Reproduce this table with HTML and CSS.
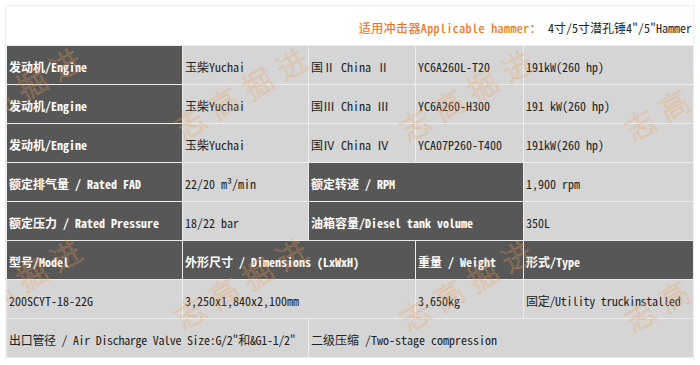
FILE: index.html
```html
<!DOCTYPE html>
<html lang="zh-CN">
<head>
  <meta charset="UTF-8">
  <title>200SCYT-18-22G 参数</title>
  <link rel="stylesheet" href="styles.css">
</head>
<body>
  <div class="sheet">
    <div class="caption">
      <span class="caption-label">适用冲击器Applicable hammer：</span>
      <span class="caption-value">4寸/5寸潜孔锤4"/5"Hammer</span>
    </div>
    <table class="specs">
      <colgroup>
        <col class="c1"><col class="c2"><col class="c3"><col class="c4"><col class="c5">
      </colgroup>
      <tr>
        <td class="head">发动机/Engine</td>
        <td>玉柴Yuchai</td>
        <td>国Ⅱ China Ⅱ</td>
        <td>YC6A260L-T20</td>
        <td>191kW(260 hp)</td>
      </tr>
      <tr>
        <td class="head">发动机/Engine</td>
        <td>玉柴Yuchai</td>
        <td>国Ⅲ China Ⅲ</td>
        <td>YC6A260-H300</td>
        <td>191 kW(260 hp)</td>
      </tr>
      <tr>
        <td class="head">发动机/Engine</td>
        <td>玉柴Yuchai</td>
        <td>国Ⅳ China Ⅳ</td>
        <td>YCA07P260-T400</td>
        <td>191kW(260 hp)</td>
      </tr>
      <tr>
        <td class="head">额定排气量 / Rated FAD</td>
        <td>22/20 m³/min</td>
        <td class="head" colspan="2">额定转速 / RPM</td>
        <td>1,900 rpm</td>
      </tr>
      <tr>
        <td class="head">额定压力 / Rated Pressure</td>
        <td>18/22 bar</td>
        <td class="head" colspan="2">油箱容量/Diesel tank volume</td>
        <td>350L</td>
      </tr>
      <tr>
        <td class="head">型号/Model</td>
        <td class="head" colspan="2">外形尺寸 / Dimensions (LxWxH)</td>
        <td class="head">重量 / Weight</td>
        <td class="head">形式/Type</td>
      </tr>
      <tr>
        <td>200SCYT-18-22G</td>
        <td colspan="2">3,250x1,840x2,100mm</td>
        <td>3,650kg</td>
        <td class="tight">固定/Utility truckinstalled</td>
      </tr>
      <tr>
        <td class="tight" colspan="2">出口管径 / Air Discharge Valve Size:G/2"和&amp;G1-1/2"</td>
        <td colspan="3">二级压缩 /Two-stage compression</td>
      </tr>
    </table>

    <!-- watermark layer -->
    <div class="watermarks">
      <span class="wm" style="left: 12px; top: 84px">志高掘进</span>
      <span class="wm" style="left: 238px; top: 84px">志高掘进</span>
      <span class="wm" style="left: 463px; top: 86px">志高掘进</span>
      <span class="wm" style="left: 688px; top: 86px">志高掘进</span>
      <span class="wm" style="left: 12px; top: 275px">志高掘进</span>
      <span class="wm" style="left: 238px; top: 274px">志高掘进</span>
      <span class="wm" style="left: 463px; top: 276px">志高掘进</span>
      <span class="wm" style="left: 688px; top: 277px">志高掘进</span>
    </div>
  </div>
</body>
</html>
```

FILE: styles.css
```css
* {
  margin: 0;
  padding: 0;
  box-sizing: border-box;
}

body {
  background: #fff;
  font-family: 'Noto Sans Mono CJK SC', 'Noto Sans CJK SC', 'Liberation Mono', monospace;
  font-size: 12px;
  color: #222;
}

.sheet {
  position: relative;
  width: 689px;
  height: 356px;
  margin: 5px 0 0 5px;
  border: 1px solid #eeeeee;
  border-bottom: none;
  overflow: hidden;
}

.caption {
  display: flex;
  justify-content: flex-end;
  align-items: center;
  height: 39px;
  padding-top: 4px;
  padding-right: 1px;
  white-space: nowrap;
}

.caption-label {
  color: #f07418;
  letter-spacing: 0.4px;
  -webkit-text-stroke: 0.2px #f07418;
}

.caption-value {
  color: #222;
  margin-left: 6px;
}

.specs {
  width: 687px;
  table-layout: fixed;
  border-collapse: collapse;
}

.c1 { width: 176px; }
.c2 { width: 126px; }
.c3 { width: 107px; }
.c4 { width: 108px; }
.c5 { width: 170px; }

.specs tr {
  height: 39px;
}

.specs td {
  background: #d5d5d5;
  border: 1px solid #ececec;
  padding: 2px 0 0 2px;
  white-space: nowrap;
  overflow: visible;
  vertical-align: middle;
}

.specs td.head {
  background: #575757;
  color: #fff;
  font-weight: bold;
}

.specs td.tight {
  letter-spacing: -0.3px;
}

.watermarks {
  position: absolute;
  inset: 0;
  pointer-events: none;
}

.wm {
  position: absolute;
  transform: translate(-50%, -50%) rotate(-30deg);
  font-family: 'Noto Sans CJK SC', sans-serif;
  font-size: 30px;
  font-weight: 300;
  letter-spacing: 9px;
  white-space: nowrap;
  color: transparent;
  -webkit-text-stroke: 0.6px rgba(240, 160, 80, 0.55);
}
```
